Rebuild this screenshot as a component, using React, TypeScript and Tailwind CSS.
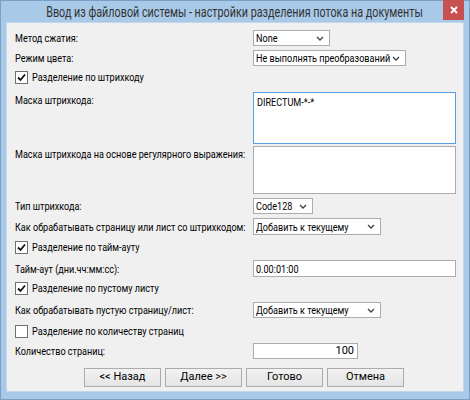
import React from "react";

const font = { fontFamily: 'Roboto, "Liberation Sans", Arial, sans-serif' };

function Txt({ children, className = "" }: { children: React.ReactNode; className?: string }) {
  return (
    <span className={`block origin-left scale-x-[0.79] whitespace-nowrap text-[11.5px] leading-[16px] text-black ${className}`}>
      {children}
    </span>
  );
}

function Chevron() {
  return (
    <svg width="8" height="5" viewBox="0 0 8 5" className="shrink-0">
      <path d="M1 1 L4 4 L7 1" fill="none" stroke="#404040" strokeWidth="1.3" />
    </svg>
  );
}

function Select({ value, width, h = "h-[16px]" }: { value: string; width: string; h?: string }) {
  return (
    <div className={`${width} ${h} flex items-center border border-[#acacac] bg-white pl-[2px] pr-[5px]`}>
      <Txt className="w-0 flex-1">{value}</Txt>
      <Chevron />
    </div>
  );
}

function CheckRow({ label, checked }: { label: string; checked: boolean }) {
  return (
    <div className="flex h-[16px] items-center gap-[4px] pl-[8px]">
      <div className="flex h-[13px] w-[13px] shrink-0 items-center justify-center border border-[#707070] bg-white">
        {checked ? (
          <svg width="9" height="9" viewBox="0 0 9 9">
            <path d="M1 4.5 L3.5 7 L8 1.5" fill="none" stroke="#111" strokeWidth="1.8" />
          </svg>
        ) : null}
      </div>
      <Txt className="w-0 flex-1">{label}</Txt>
    </div>
  );
}

function Row({ label, children, className = "" }: { label: string; children: React.ReactNode; className?: string }) {
  return (
    <div className={`grid grid-cols-[238px_1fr] pl-[8px] pr-[7px] ${className}`}>
      <Txt>{label}</Txt>
      <div>{children}</div>
    </div>
  );
}

function Button({ label }: { label: string }) {
  return (
    <div className="flex h-[19px] w-[77px] items-center justify-center border border-[#acacac] bg-gradient-to-b from-[#f2f2f2] to-[#e5e5e5] text-[11px] text-black">
      {label}
    </div>
  );
}

export default function App() {
  return (
    <div style={font} className="flex h-[400px] w-[470px] flex-col border border-[#7d9fc4] bg-[#a9c9e8]">
      <div className="relative flex h-[21px] items-center justify-center">
        <span className="block shrink-0 scale-x-[0.77] whitespace-nowrap text-[14px] leading-none text-[#333]">
          Ввод из файловой системы - настройки разделения потока на документы
        </span>
        <div className="absolute right-[5px] top-[-1px] flex h-[20px] w-[21px] items-center justify-center bg-[#c75050]">
          <svg width="8" height="8" viewBox="0 0 8 8">
            <path d="M1 1 L7 7 M7 1 L1 7" stroke="#fff" strokeWidth="1.8" />
          </svg>
        </div>
      </div>
      <div className="mx-[5px] flex h-[370px] flex-col border border-[#c3d7ec] bg-[#f0f0f0]">
        <Row label="Метод сжатия:" className="mt-[7px] items-center">
          <Select value="None" width="w-[77px]" />
        </Row>
        <Row label="Режим цвета:" className="mt-[4px] items-center">
          <Select value="Не выполнять преобразований" width="w-[153px]" />
        </Row>
        <div className="mt-[3px]">
          <CheckRow label="Разделение по штрихкоду" checked />
        </div>
        <Row label="Маска штрихкода:" className="mt-[7px]">
          <div className="h-[52px] border border-[#569de5] bg-white px-[3px] pt-[1px]">
            <Txt>DIRECTUM-*-*</Txt>
          </div>
        </Row>
        <Row label="Маска штрихкода на основе регулярного выражения:" className="mt-[2px]">
          <div className="h-[48px] border border-[#acacac] bg-white" />
        </Row>
        <Row label="Тип штрихкода:" className="mt-[4px] items-center">
          <Select value="Code128" width="w-[60px]" />
        </Row>
        <Row label="Как обрабатывать страницу или лист со штрихкодом:" className="mt-[4px] items-center">
          <Select value="Добавить к текущему" width="w-[128px]" h="h-[17px]" />
        </Row>
        <div className="mt-[4px]">
          <CheckRow label="Разделение по тайм-ауту" checked />
        </div>
        <Row label="Тайм-аут (дни.чч:мм:сс):" className="mt-[5px] items-center">
          <div className="flex h-[17px] items-center border border-[#acacac] bg-white pl-[2px]">
            <Txt>0.00:01:00</Txt>
          </div>
        </Row>
        <div className="mt-[3px]">
          <CheckRow label="Разделение по пустому листу" checked />
        </div>
        <Row label="Как обрабатывать пустую страницу/лист:" className="mt-[6px] items-center">
          <Select value="Добавить к текущему" width="w-[128px]" />
        </Row>
        <div className="mt-[5px]">
          <CheckRow label="Разделение по количеству страниц" checked={false} />
        </div>
        <Row label="Количество страниц:" className="mt-[4px] items-center">
          <div className="flex h-[16px] w-[105px] items-center justify-end border border-[#acacac] bg-white pr-[3px] text-[11px] text-black">
            100
          </div>
        </Row>
        <div className="mt-[9px] flex gap-[4px] pl-[77px]">
          <Button label="<< Назад" />
          <Button label="Далее >>" />
          <Button label="Готово" />
          <Button label="Отмена" />
        </div>
      </div>
    </div>
  );
}
